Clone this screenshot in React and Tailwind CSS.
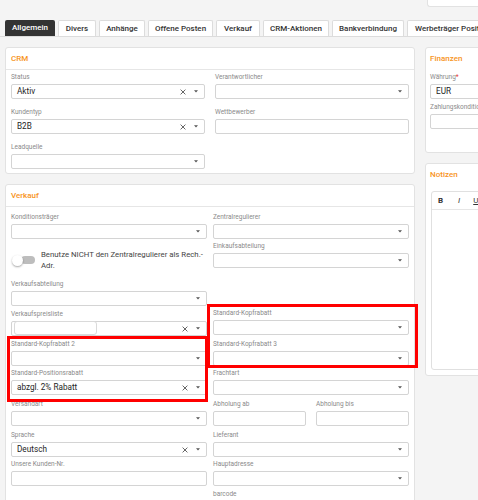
import React from "react";

const Caret = () => (
  <svg width="4" height="3" viewBox="0 0 4 3" className="block">
    <polygon points="0,0.3 4,0.3 2,2.6" fill="#555" />
  </svg>
);

const Cross = () => (
  <svg width="6" height="6" viewBox="0 0 6 6" className="block">
    <path d="M0.6 0.6 L5.4 5.4 M5.4 0.6 L0.6 5.4" stroke="#555" strokeWidth="0.9" />
  </svg>
);

const Label = ({ children }) => (
  <div className="h-[9px] leading-[9px] text-[6.5px] text-[#8a8a8a] mb-[2px] whitespace-nowrap">
    {children}
  </div>
);

const Input = ({ value, select, clear, children }) => (
  <div className="h-[15px] bg-white border border-[#d4d4d4] rounded-[2px] flex items-center pl-[5px] text-[8.2px] text-[#1e1e1e] leading-none overflow-hidden">
    {children}
    {value && <span className="whitespace-nowrap">{value}</span>}
    {select && (
      <div className="ml-auto flex items-center gap-[8px] pr-[6px]">
        {clear && <Cross />}
        <Caret />
      </div>
    )}
  </div>
);

const Field = ({ label, className = "", ...rest }) => (
  <div className={className}>
    <Label>{label}</Label>
    <Input {...rest} />
  </div>
);

const tabs = [
  { t: "Allgemein", w: "w-[50px]", active: true },
  { t: "Divers", w: "w-[38px]" },
  { t: "Anhänge", w: "w-[46px]" },
  { t: "Offene Posten", w: "w-[65px]" },
  { t: "Verkauf", w: "w-[44px]" },
  { t: "CRM-Aktionen", w: "w-[66px]" },
  { t: "Bankverbindung", w: "w-[72px]" },
];

const CardHeader = ({ title, line = true }) => (
  <div
    className={`h-[22px] flex items-center text-[8px] font-medium text-[#f7941d] ${
      line ? "border-b border-[#e6e6e6] pl-[5px]" : "pl-[4px]"
    }`}
  >
    {title}
  </div>
);

export default function App() {
  return (
    <div className="w-[478px] h-[500px] overflow-hidden bg-[#f4f4f4] relative font-[family-name:Roboto,sans-serif]">
      {/* top strip */}
      <div className="h-[7px] flex">
        <div className="ml-[427px] flex-1 bg-white border-l border-b border-[#e2e2e2] rounded-bl-[3px]" />
      </div>

      {/* tabs */}
      <div className="mt-[13px] h-[17px] flex items-end gap-[3px] pl-[5px] border-b border-[#dcdcdc] overflow-hidden">
        {tabs.map((tb) => (
          <div
            key={tb.t}
            className={`${tb.w} h-[16px] shrink-0 flex items-center justify-center rounded-t-[2px] text-[8px] font-medium whitespace-nowrap ${
              tb.active
                ? "bg-[#333333] text-white"
                : "bg-white border border-b-0 border-[#dcdcdc] text-[#333]"
            }`}
          >
            {tb.t}
          </div>
        ))}
        <div className="w-[100px] h-[16px] shrink-0 flex items-center pl-[7px] rounded-t-[2px] text-[8px] font-medium whitespace-nowrap bg-white border border-b-0 border-[#dcdcdc] text-[#333]">
          Werbeträger Positionen
        </div>
      </div>

      {/* main */}
      <div className="flex gap-[10px] px-[5px] mt-[10px]">
        {/* left column */}
        <div className="w-[410px] shrink-0 flex flex-col gap-[10px]">
          {/* CRM */}
          <div className="bg-white border border-[#e2e2e2] rounded-[3px]">
            <CardHeader title="CRM" />
            <div className="grid grid-cols-2 gap-x-[10px] gap-y-[9px] pt-[3px] pb-[4px] px-[5px]">
              <Field label="Status" value="Aktiv" select clear />
              <Field label="Verantwortlicher" select />
              <Field label="Kundentyp" value="B2B" select clear />
              <Field label="Wettbewerber" />
              <Field label="Leadquelle" select />
            </div>
          </div>

          {/* Verkauf */}
          <div className="bg-white border border-[#e2e2e2] rounded-[3px] h-[400px]">
            <CardHeader title="Verkauf" />
            <div className="flex gap-[6px] px-[5px] pt-[6px]">
              {/* left */}
              <div className="w-[196px] flex flex-col">
                <Field label="Konditionsträger" select />
                <div className="mt-[10px] flex items-center">
                  <div className="w-[24px] h-[22px] ml-[1px] relative flex items-center shrink-0">
                    <div className="ml-[9px] w-[14px] h-[8px] rounded-full bg-[#bdbdbd]" />
                    <div className="absolute left-0 top-[5.5px] w-[11px] h-[11px] rounded-full bg-white shadow-[0_1px_2px_rgba(0,0,0,0.35)]" />
                  </div>
                  <div className="ml-[5px] w-[170px] text-[7.8px] leading-[11px] text-[#444]">
                    Benutze NICHT den Zentralregulierer als Rech.-Adr.
                  </div>
                </div>
                <Field className="mt-[9px]" label="Verkaufsabteilung" select />
                <div className="mt-[4px]">
                  <Label>Verkaufspreisliste</Label>
                  <div className="h-[15px] bg-white border border-[#d4d4d4] rounded-[2px] flex items-stretch pl-[2px]">
                    <div className="w-[83px] border border-[#dadada] rounded-[3px] -mt-[1px]" />
                    <div className="ml-auto flex items-center gap-[8px] pr-[6px]">
                      <Cross />
                      <Caret />
                    </div>
                  </div>
                </div>
                <Field className="mt-[4px]" label="Standard-Kopfrabatt 2" select />
                <Field className="mt-[3px]" label="Standard-Positionsrabatt" value="abzgl. 2% Rabatt" select clear />
                <Field className="mt-[5px]" label="Versandart" select />
                <Field className="mt-[5px]" label="Sprache" value="Deutsch" select clear />
                <Field className="mt-[3px]" label="Unsere Kunden-Nr." />
              </div>
              {/* right */}
              <div className="w-[196px] flex flex-col">
                <Field label="Zentralregulierer" select />
                <Field className="mt-[3px]" label="Einkaufsabteilung" select />
                <Field className="mt-[41px]" label="Standard-Kopfrabatt" select />
                <Field className="mt-[5px]" label="Standard-Kopfrabatt 3" select />
                <Field className="mt-[3px]" label="Frachtart" select />
                <div className="mt-[5px] flex gap-[10px]">
                  <Field className="w-[93px]" label="Abholung ab" />
                  <Field className="w-[93px]" label="Abholung bis" />
                </div>
                <Field className="mt-[5px]" label="Lieferant" select />
                <Field className="mt-[3px]" label="Hauptadresse" select />
                <div className="mt-[4px]">
                  <Label>barcode</Label>
                </div>
              </div>
            </div>
          </div>
        </div>

        {/* right column */}
        <div className="w-[200px] shrink-0 flex flex-col gap-[10px]">
          <div className="bg-white border border-[#e2e2e2] rounded-[3px]">
            <CardHeader title="Finanzen" line={false} />
            <div className="flex flex-col gap-[4px] pt-[3px] pb-[23px] pl-[4px] pr-[5px]">
              <div>
                <div className="h-[9px] leading-[9px] text-[6.5px] text-[#8a8a8a] mb-[2px] whitespace-nowrap">
                  Währung<span className="text-[#e53935]">*</span>
                </div>
                <Input value="EUR" select />
              </div>
              <Field label="Zahlungskonditionen" select />
            </div>
          </div>
          <div className="bg-white border border-[#e2e2e2] rounded-[3px] pb-[5px]">
            <CardHeader title="Notizen" line={false} />
            <div className="ml-[5px] mr-[5px] mt-[5px] h-[179px] border border-[#e0e0e0] rounded-[3px]">
              <div className="h-[18px] border-b border-[#e6e6e6] flex items-center text-[8px] text-[#333]">
                <span className="ml-[6px] font-bold">B</span>
                <span className="ml-[15px] italic">I</span>
                <span className="ml-[13px] underline">U</span>
              </div>
            </div>
          </div>
        </div>
      </div>

      {/* annotation boxes */}
      <div className="absolute left-[7px] top-[336px] w-[201px] h-[66px] border-[3px] border-[#ff0000]" />
      <div className="absolute left-[207px] top-[304px] w-[211px] h-[64px] border-[3px] border-[#ff0000]" />
    </div>
  );
}
